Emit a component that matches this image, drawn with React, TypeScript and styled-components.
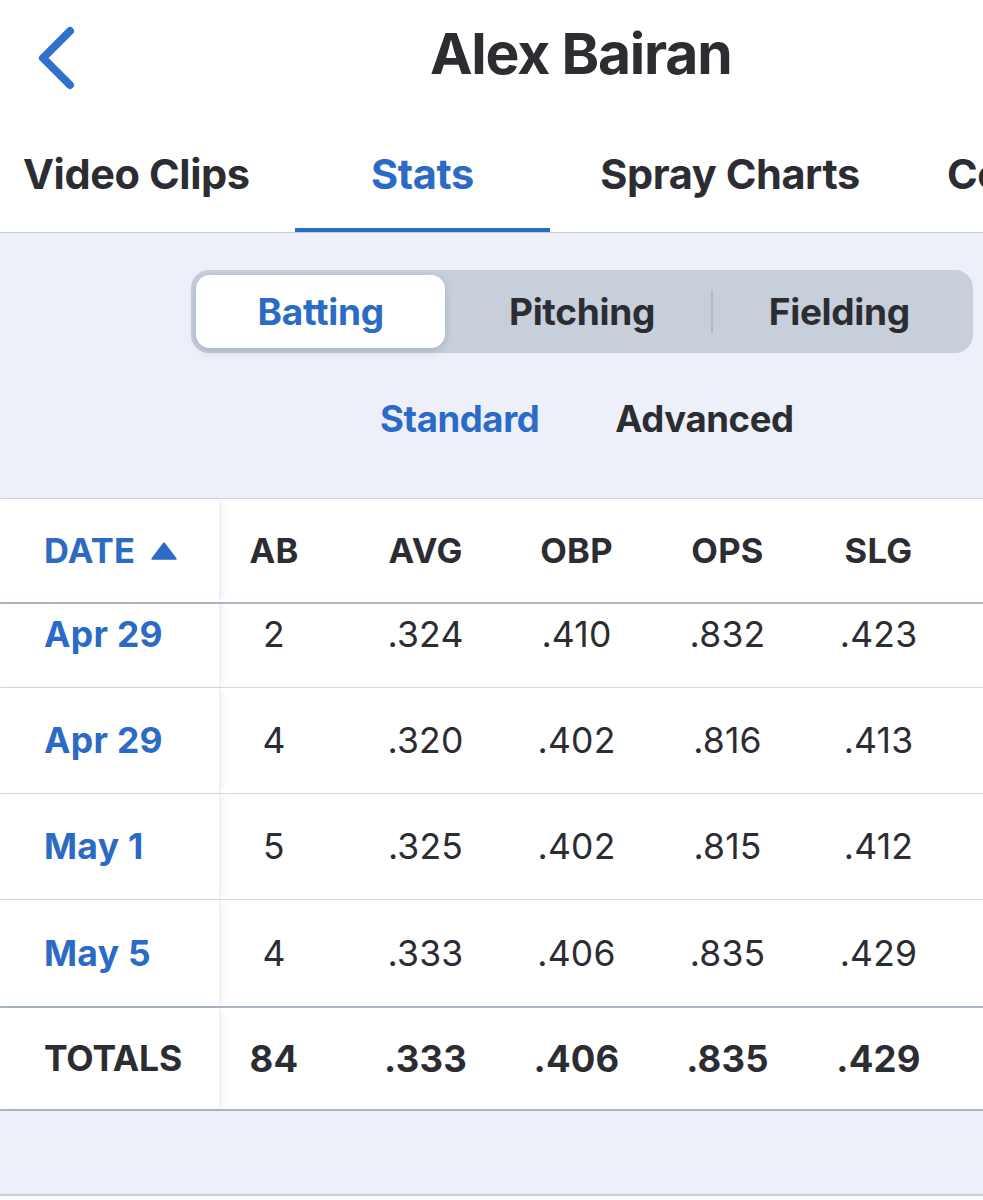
import React from "react";
import styled, { createGlobalStyle } from "styled-components";

const BLUE = "#2b6bc5";
const INK = "#2c2d32";

const GlobalStyle = createGlobalStyle`
  html, body {
    margin: 0;
    padding: 0;
    background: #ffffff;
  }
  body {
    font-family: Inter, "Liberation Sans", Arial, sans-serif;
    color: ${INK};
    -webkit-font-smoothing: antialiased;
  }
`;

const Page = styled.div`
  width: 983px;
  height: 1200px;
  overflow: hidden;
  display: flex;
  flex-direction: column;
  background: #ffffff;
`;

const Header = styled.div`
  height: 112px;
  display: flex;
  align-items: center;
  padding-left: 34px;
  gap: 352px;
`;

const BackButton = styled.div`
  width: 44px;
  height: 64px;
  display: flex;
  align-items: center;
  justify-content: center;
  margin-top: 4px;
`;

const Title = styled.h1`
  margin: 0 0 6px;
  font-size: 57px;
  font-weight: 700;
  letter-spacing: -1.2px;
  color: ${INK};
`;

const TabBar = styled.div`
  height: 120px;
  display: flex;
  align-items: stretch;
  border-bottom: 1px solid #c9cfd8;
  overflow: hidden;
  white-space: nowrap;
`;

const Tab = styled.div<{ $w: number; $left?: number; $active?: boolean }>`
  position: relative;
  flex: 0 0 ${(p) => p.$w}px;
  display: flex;
  align-items: center;
  justify-content: ${(p) => (p.$left !== undefined ? "flex-start" : "center")};
  padding-left: ${(p) => p.$left ?? 0}px;
  box-sizing: border-box;
  font-size: 41.5px;
  font-weight: 700;
  letter-spacing: -0.4px;
  color: ${(p) => (p.$active ? BLUE : INK)};
  padding-top: 4px;

  ${(p) =>
    p.$active &&
    `
    &::after {
      content: "";
      position: absolute;
      left: 0;
      right: 0;
      bottom: 0;
      height: 4px;
      background: ${BLUE};
    }
  `}
`;

const Content = styled.div`
  background: #edf0f8;
  display: flex;
  flex-direction: column;
  flex: 1;
`;

const Segmented = styled.div`
  margin: 37px 10px 0 191px;
  height: 83px;
  box-sizing: border-box;
  padding: 5px;
  border-radius: 18px;
  background: #c6cfda;
  display: grid;
  grid-template-columns: repeat(3, 1fr);
  align-items: stretch;
`;

const Segment = styled.div<{ $active?: boolean; $divider?: boolean }>`
  position: relative;
  display: flex;
  align-items: center;
  justify-content: center;
  font-size: 37px;
  font-weight: 700;
  letter-spacing: -0.3px;
  color: ${(p) => (p.$active ? BLUE : INK)};
  border-radius: 14px;
  margin-right: ${(p) => (p.$active ? "8px" : "0")};
  background: ${(p) => (p.$active ? "#ffffff" : "transparent")};
  box-shadow: ${(p) =>
    p.$active ? "0 3px 8px rgba(40, 50, 70, 0.18)" : "none"};

  ${(p) =>
    p.$divider &&
    `
    &::before {
      content: "";
      position: absolute;
      left: 0;
      top: 15px;
      bottom: 15px;
      width: 2px;
      background: #b1bac6;
    }
  `}
`;

const SubTabs = styled.div`
  height: 145px;
  display: flex;
  align-items: center;
  padding-left: 380px;
  gap: 76px;
  padding-bottom: 14px;
  box-sizing: border-box;
`;

const SubTab = styled.div<{ $active?: boolean }>`
  font-size: 36.5px;
  font-weight: 700;
  letter-spacing: -0.4px;
  color: ${(p) => (p.$active ? BLUE : INK)};
`;

const Table = styled.div`
  background: #ffffff;
  border-top: 1px solid #cdd4de;
  border-bottom: 2px solid #a9b4c3;
  display: flex;
  flex-direction: column;
`;

const Row = styled.div<{ $h: number; $line?: string }>`
  height: ${(p) => p.$h}px;
  box-sizing: border-box;
  display: grid;
  grid-template-columns: 220px 130px repeat(4, 151px) 1fr;
  align-items: stretch;
  border-bottom: ${(p) => p.$line ?? "1px solid #d3d9e1"};
`;

const Body = styled.div`
  height: 402px;
  overflow: hidden;
  border-bottom: 2px solid #a9b4c3;
`;

const BodyScroll = styled.div`
  margin-top: -22px;
`;

const DateCell = styled.div<{ $kind: "head" | "date" | "total" }>`
  display: flex;
  align-items: center;
  padding-left: 44px;
  gap: 16px;
  box-shadow: 4px 0 6px -3px rgba(60, 75, 100, 0.14);
  border-right: 1px solid #eef0f4;
  position: relative;
  z-index: 1;
  background: #ffffff;
  font-weight: 700;
  font-size: ${(p) => (p.$kind === "head" ? "34.5px" : "35.5px")};
  letter-spacing: ${(p) => (p.$kind === "total" ? "-0.2px" : "0.3px")};
  color: ${(p) => (p.$kind === "total" ? INK : BLUE)};
`;

const Cell = styled.div<{ $kind: "head" | "data" | "total" }>`
  display: flex;
  align-items: center;
  justify-content: center;
  font-size: ${(p) => (p.$kind === "head" ? "34.5px" : p.$kind === "total" ? "36.5px" : "35.5px")};
  font-weight: ${(p) => (p.$kind === "data" ? 400 : 700)};
  letter-spacing: ${(p) => (p.$kind === "head" ? "0.3px" : "0.2px")};
  color: ${INK};

  &:nth-child(2) {
    padding-right: 22px;
  }
`;

const Footer = styled.div`
  height: 4px;
  border-top: 2px solid #c9d0da;
  background: #ffffff;
`;

const SortArrow = () => (
  <svg width="26" height="18" viewBox="0 0 26 18">
    <path d="M13 1 L25 17 L1 17 Z" fill={BLUE} stroke={BLUE} strokeWidth="1.5" strokeLinejoin="round" />
  </svg>
);

const Chevron = () => (
  <svg width="42" height="64" viewBox="0 0 42 64">
    <path
      d="M35 5 L8 32 L35 59"
      fill="none"
      stroke="#2f6fce"
      strokeWidth="8"
      strokeLinecap="round"
      strokeLinejoin="round"
    />
  </svg>
);

const cols = ["AB", "AVG", "OBP", "OPS", "SLG"];

const games = [
  { date: "Apr 29", vals: ["2", ".324", ".410", ".832", ".423"] },
  { date: "Apr 29", vals: ["4", ".320", ".402", ".816", ".413"] },
  { date: "May 1", vals: ["5", ".325", ".402", ".815", ".412"] },
  { date: "May 5", vals: ["4", ".333", ".406", ".835", ".429"] },
];

const totals = ["84", ".333", ".406", ".835", ".429"];

export default function App() {
  return (
    <Page>
      <GlobalStyle />
      <Header>
        <BackButton>
          <Chevron />
        </BackButton>
        <Title>Alex Bairan</Title>
      </Header>

      <TabBar>
        <Tab $w={295} $left={23}>Video Clips</Tab>
        <Tab $w={255} $active>Stats</Tab>
        <Tab $w={360}>Spray Charts</Tab>
        <Tab $w={200} $left={37}>Coaching</Tab>
      </TabBar>

      <Content>
        <Segmented>
          <Segment $active>Batting</Segment>
          <Segment>Pitching</Segment>
          <Segment $divider>Fielding</Segment>
        </Segmented>

        <SubTabs>
          <SubTab $active>Standard</SubTab>
          <SubTab>Advanced</SubTab>
        </SubTabs>

        <Table>
          <Row $h={105} $line="2px solid #a9b4c3">
            <DateCell $kind="head">
              DATE <SortArrow />
            </DateCell>
            {cols.map((c) => (
              <Cell key={c} $kind="head">{c}</Cell>
            ))}
            <div />
          </Row>

          <Body>
            <BodyScroll>
              {games.map((g, i) => (
                <Row key={i} $h={106} $line={i === games.length - 1 ? "none" : undefined}>
                  <DateCell $kind="date">{g.date}</DateCell>
                  {g.vals.map((v, j) => (
                    <Cell key={j} $kind="data">{v}</Cell>
                  ))}
                  <div />
                </Row>
              ))}
            </BodyScroll>
          </Body>

          <Row $h={101} $line="none">
            <DateCell $kind="total">TOTALS</DateCell>
            {totals.map((v, j) => (
              <Cell key={j} $kind="total">{v}</Cell>
            ))}
            <div />
          </Row>
        </Table>
      </Content>
      <Footer />
    </Page>
  );
}
